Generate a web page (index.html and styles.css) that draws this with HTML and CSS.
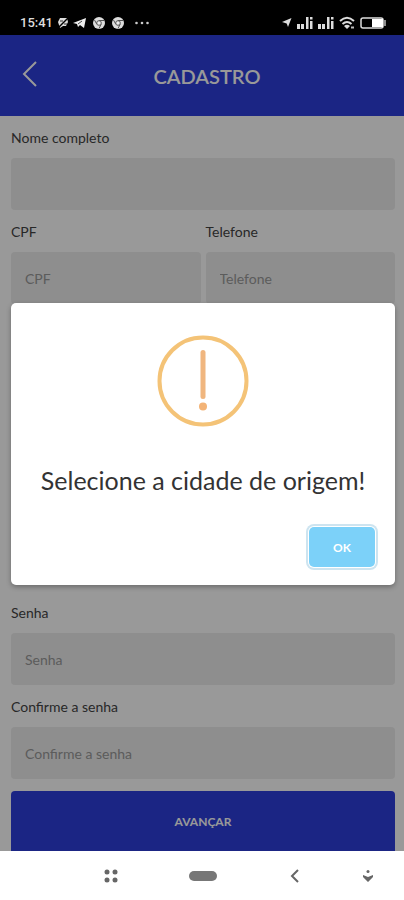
FILE: index.html
```html
<!DOCTYPE html>
<html lang="pt-BR">
  <head>
    <meta charset="UTF-8" />
    <meta name="viewport" content="width=device-width, initial-scale=1.0" />
    <title>Cadastro</title>
    <link rel="stylesheet" href="styles.css">
  </head>
  <body>
    <div class="status-bar">
      <div class="status-left">
        <span class="clock">15:41</span>
        <svg width="12" height="12" viewBox="0 0 12 12">
          <path d="M3 1h7l1 4-2 4H6l-3 2-1-3-1-3z" fill="#ddd" />
          <path d="M1 11L11 1" stroke="#000" stroke-width="1.500" />
          <path d="M3 4h3M7 7h3" stroke="#333" />
        </svg>
        <svg width="13" height="12" viewBox="0 0 13 12">
          <path d="M0 6L13 1l-2 10-4-3-2 2-1-3z" fill="#eee" />
          <path d="M5 7l4-3" fill="none" stroke="#444" />
        </svg>
        <svg class="browser-icon" width="12" height="12" viewBox="0 0 12 12">
          <circle cx="6" cy="6" r="6" fill="#ddd" />
          <path d="M6 3.500h5M3.800 7.200L1.500 3M8.200 7.200L6 11.500" stroke="#555" />
          <circle cx="6" cy="6" r="2.300" fill="#eee" stroke="#555" />
        </svg>
        <svg class="browser-icon" width="12" height="12" viewBox="0 0 12 12">
          <circle cx="6" cy="6" r="6" fill="#ddd" />
          <path d="M6 3.500h5M3.800 7.200L1.500 3M8.200 7.200L6 11.500" stroke="#555" />
          <circle cx="6" cy="6" r="2.300" fill="#eee" stroke="#555" />
        </svg>
        <svg class="more-icon" width="14" height="12" viewBox="0 0 14 12" fill="#ccc">
          <circle cx="1.500" cy="6" r="1.300" />
          <circle cx="7" cy="6" r="1.300" />
          <circle cx="12.500" cy="6" r="1.300" />
        </svg>
      </div>
      <div class="status-right">
        <svg width="10" height="14" viewBox="0 0 10 14">
          <path d="M0 6L9.500 2 6 11 4.700 7.500z" fill="#ddd" />
        </svg>
        <svg width="16" height="14" viewBox="0 0 16 14" fill="#ddd">
          <path d="M0 8h3v5H0zM4 8h3v5H4zM9 1h2.500v12H9zM13 5h2.500v8H13zM13 1h2.500v2.500H13z" />
        </svg>
        <svg width="16" height="14" viewBox="0 0 16 14" fill="#ddd">
          <path d="M0 8h3v5H0zM4 8h3v5H4zM9 1h2.500v12H9zM13 5h2.500v8H13zM13 1h2.500v2.500H13z" />
        </svg>
        <svg width="16" height="14" viewBox="0 0 16 14">
          <path d="M1 5Q8-1.500 15 5M3.500 8Q8 4 12.500 8" fill="none" stroke="#ddd" stroke-width="2" />
          <path d="M5 10Q8 7.500 11 10l-3 3z" fill="#ddd" />
          <path d="M12 11.500h3" stroke="#bbb" stroke-width="2" />
        </svg>
        <svg width="26" height="14" viewBox="0 0 26 14">
          <rect x="1" y="2" width="22" height="10" rx="2" fill="none" stroke="#ddd" stroke-width="1.500" />
          <rect x="12" y="3" width="11" height="8" fill="#fff" />
          <path d="M25 4v6" stroke="#bbb" stroke-width="1.500" />
        </svg>
      </div>
    </div>

    <div class="app">
      <header class="header">
        <button class="back" type="button" aria-label="Voltar">
          <svg width="16" height="28" viewBox="0 0 16 28">
            <path d="M14 2L2 14l12 12" fill="none" stroke="#fff" stroke-width="2" />
          </svg>
        </button>
        <h1>CADASTRO</h1>
      </header>

      <form class="form">
        <div class="group">
          <div class="field">
            <label for="nome">Nome completo</label>
            <input type="text" id="nome" />
          </div>
          <div class="row">
            <div class="field">
              <label for="cpf">CPF</label>
              <input type="text" id="cpf" placeholder="CPF" />
            </div>
            <div class="field">
              <label for="telefone">Telefone</label>
              <input type="tel" id="telefone" placeholder="Telefone" />
            </div>
          </div>
        </div>

        <div class="group">
          <div class="field">
            <label for="senha">Senha</label>
            <input type="password" id="senha" placeholder="Senha" />
          </div>
          <div class="field">
            <label for="confirme">Confirme a senha</label>
            <input type="password" id="confirme" placeholder="Confirme a senha" />
          </div>
          <button class="submit" type="submit">AVANÇAR</button>
        </div>
      </form>

      <div class="overlay">
        <div class="modal" role="alertdialog" aria-labelledby="modal-title">
          <svg class="warning" width="92" height="92" viewBox="0 0 92 92">
            <circle cx="46" cy="46" r="43.500" fill="none" stroke="#f4c377" stroke-width="4" />
            <rect x="43.500" y="15" width="5" height="49" rx="2.500" fill="#f0b67f" />
            <circle cx="46" cy="71.500" r="4" fill="#f3b376" />
          </svg>
          <h2 id="modal-title">Selecione a cidade de origem!</h2>
          <button class="ok" type="button">OK</button>
        </div>
      </div>
    </div>

    <nav class="nav-bar">
      <button type="button" aria-label="Aplicativos">
        <svg width="14" height="14" viewBox="0 0 14 14" fill="#666">
          <circle cx="3" cy="3" r="2.500" />
          <circle cx="11" cy="3" r="2.500" />
          <circle cx="3" cy="11" r="2.500" />
          <circle cx="11" cy="11" r="2.500" />
        </svg>
      </button>
      <button type="button" aria-label="Início">
        <svg width="28" height="10" viewBox="0 0 28 10">
          <rect width="28" height="10" rx="5" fill="#777" />
        </svg>
      </button>
      <button type="button" aria-label="Voltar">
        <svg width="10" height="14" viewBox="0 0 10 14">
          <path d="M8 1L2 7l6 6" fill="none" stroke="#666" stroke-width="2" />
        </svg>
      </button>
      <button type="button" aria-label="Ocultar barra">
        <svg width="10" height="12" viewBox="0 0 10 12" fill="#666">
          <circle cx="5" cy="1.500" r="1.500" />
          <path d="M0 5l5 2 5-2v2l-5 5-5-5z" />
        </svg>
      </button>
    </nav>
  </body>
</html>
```

FILE: styles.css
```css
* {
  box-sizing: border-box;
}
body {
  margin: 0;
  min-height: 100vh;
  display: flex;
  flex-direction: column;
  font-family: Lato, "Open Sans", sans-serif;
  background-color: #fff;
  color: #444;
}
svg {
  display: block;
}
button,
input {
  font-family: inherit;
  border: none;
}
button {
  cursor: pointer;
}

/* Phone status bar */
.status-bar {
  display: flex;
  justify-content: space-between;
  height: 35px;
  padding: 10px 18px 0 20px;
  background-color: #000;
}
.status-left,
.status-right {
  display: flex;
  align-items: center;
  gap: 4px;
}
.status-right {
  gap: 5px;
}
.clock {
  font-family: Roboto, sans-serif;
  font-size: 13px;
  font-weight: 500;
  color: #ddd;
}
.browser-icon {
  margin-left: 3px;
}
.more-icon {
  margin-left: 7px;
}

/* App */
.app {
  position: relative;
  flex: 1;
  display: flex;
  flex-direction: column;
}
.header {
  display: grid;
  grid-template-columns: 60px 1fr 50px;
  align-items: center;
  height: 81px;
  background-color: #2d3edd;
  color: #fff;
}
.header h1 {
  margin: 0;
  font-size: 20px;
  font-weight: 600;
  text-align: center;
}
.back {
  padding: 0 0 4px 22px;
  background: none;
}
.form {
  flex: 1;
  display: flex;
  flex-direction: column;
  justify-content: space-between;
  gap: 12px;
  padding: 12px 9px 0 11px;
}
.group {
  display: flex;
  flex-direction: column;
  gap: 12px;
}
.row {
  display: grid;
  grid-template-columns: 1fr 1fr;
  gap: 5px;
}
.field {
  display: flex;
  flex-direction: column;
  gap: 10px;
}
label {
  font-size: 14px;
  line-height: 20px;
}
input {
  width: 100%;
  height: 52px;
  padding: 0 14px;
  border-radius: 4px;
  background-color: #ededed;
  font-size: 14px;
}
input::placeholder {
  color: #999;
  opacity: 1;
}
.submit {
  height: 60px;
  border-radius: 4px 4px 0 0;
  background-color: #2d3edd;
  color: #fff;
  font-size: 12px;
  font-weight: bold;
}

/* Alert */
.overlay {
  position: absolute;
  inset: 0;
  display: flex;
  align-items: center;
  justify-content: center;
  padding: 2px 9px 0 11px;
  background-color: rgba(0, 0, 0, 0.4);
}
.modal {
  width: 100%;
  max-width: 480px;
  display: flex;
  flex-direction: column;
  align-items: center;
  padding: 32px 20px 18px;
  border-radius: 5px;
  background-color: #fff;
  box-shadow: 0 2px 5px rgba(0, 0, 0, 0.3);
}
.modal h2 {
  margin: 36px 0 30px;
  font-size: 25px;
  line-height: 34px;
  font-weight: normal;
  color: #333;
  text-align: center;
}
.ok {
  align-self: flex-end;
  width: 66px;
  height: 40px;
  border-radius: 5px;
  background-color: #7cd1f9;
  box-shadow: 0 0 0 1px #fff, 0 0 0 3px #cde4f0;
  color: #fff;
  font-size: 12px;
  font-weight: bold;
}

/* Phone navigation */
.nav-bar {
  display: grid;
  grid-template-columns: 5fr 5fr 5fr 3fr;
  height: 49px;
  padding: 0 2% 0 16%;
}
.nav-bar button {
  display: flex;
  align-items: center;
  justify-content: center;
  padding: 0;
  background: none;
}
```
